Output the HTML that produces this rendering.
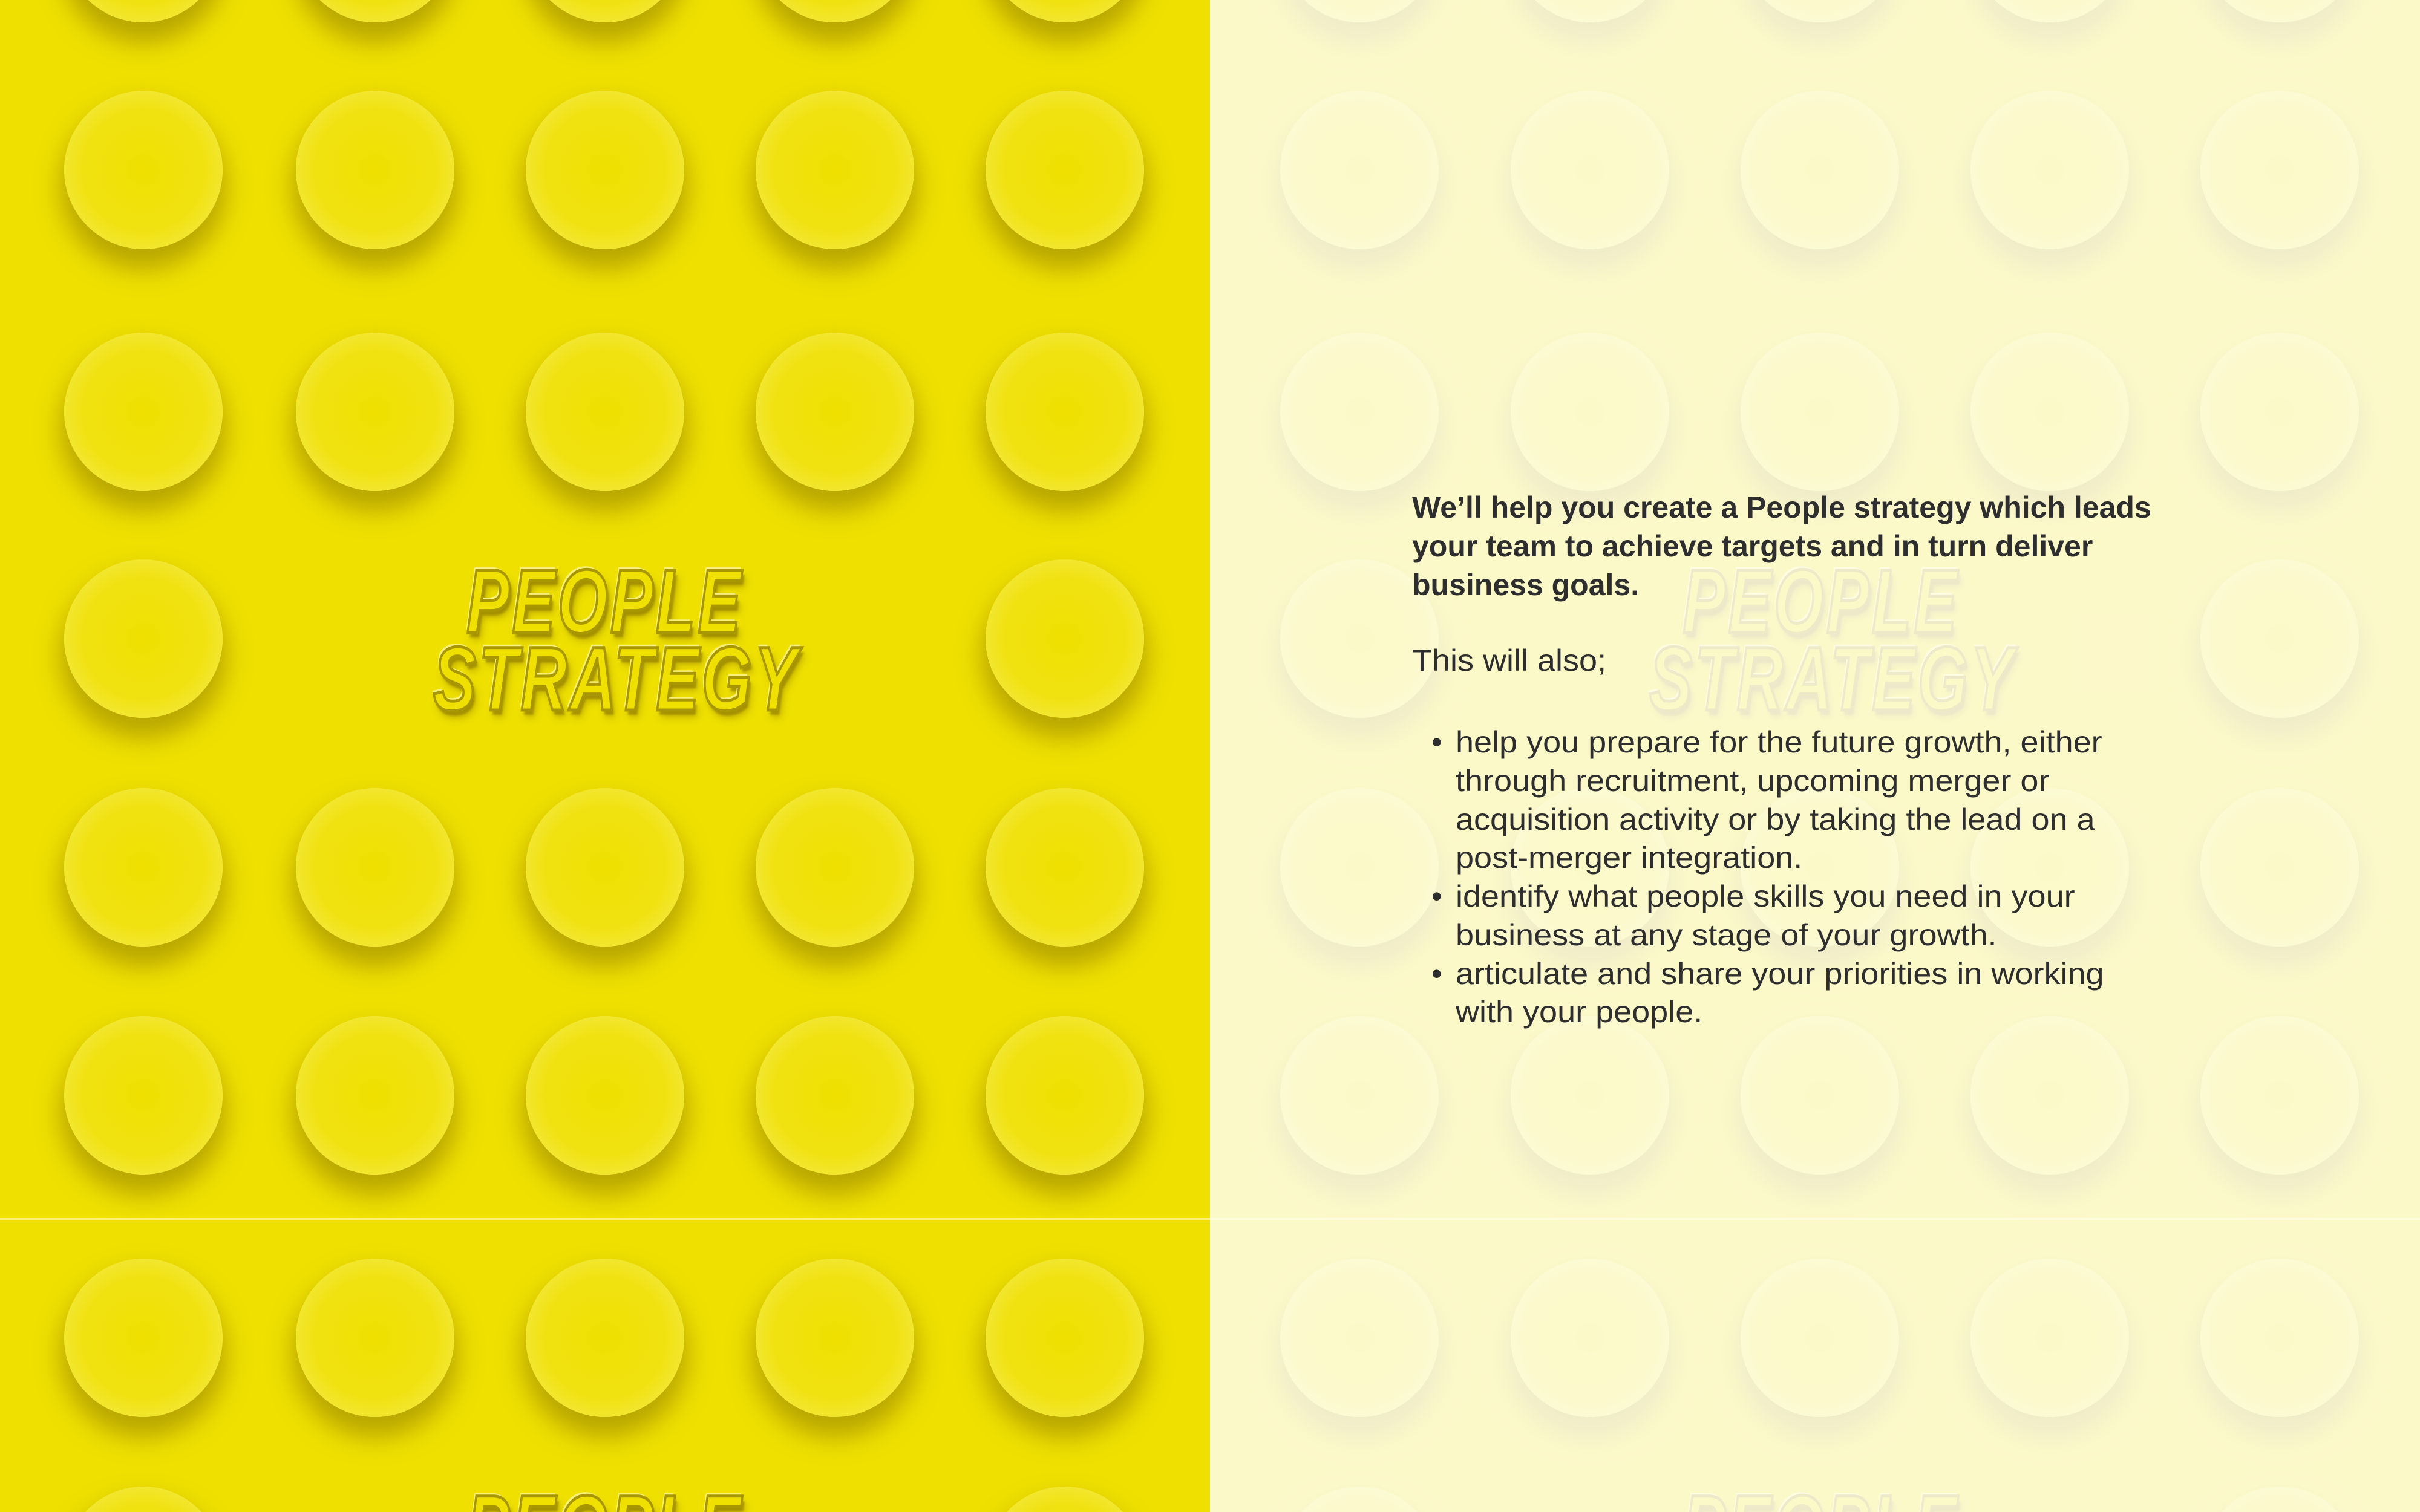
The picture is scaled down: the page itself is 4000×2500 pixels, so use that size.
<!DOCTYPE html>
<html style="overflow:hidden;width:4000px;height:2500px;"><head><meta charset="utf-8">
<style>
html,body{margin:0;padding:0;}
body{width:4000px;height:2500px;overflow:hidden;position:relative;background:#efe000;font-family:"Liberation Sans",sans-serif;}
.panel{position:absolute;top:0;width:2000px;height:2500px;overflow:hidden;background:#efe000;}
.c{position:absolute;width:262px;height:262px;border-radius:50%;
 background:radial-gradient(circle at 50% 50%,#efe000 0%,#f0e212 55%,#f4ea4a 85%,#f6ee70 100%);
 box-shadow:0 28px 40px 6px rgba(140,120,0,0.55);}
.title{position:absolute;width:800px;text-align:center;font-weight:bold;font-style:italic;color:#efe000;
 font-size:150px;line-height:128px;letter-spacing:6px;
 -webkit-text-stroke:5px #a89700;
 text-shadow:-4px -5px 0 #f8f07a,5px 8px 4px rgba(150,130,0,0.7),8px 12px 14px rgba(150,130,0,0.5);}
.title div{transform:scaleX(0.71);}
.ov{position:absolute;left:2000px;top:0;width:2000px;height:2500px;background:rgba(255,255,255,0.79);}
.t{position:absolute;left:2334px;white-space:nowrap;font-size:50px;line-height:64px;height:64px;color:#2e2e2e;transform:scaleX(1.08);transform-origin:left center;}
.b{font-weight:bold;transform:scaleX(1.0);}
.bul{position:absolute;left:2366px;font-size:50px;line-height:64px;color:#2e2e2e;}
</style></head>
<body>
<div class="panel" id="p1" style="left:0">
 <div class="title" style="left:600px;top:930px;"><div>PEOPLE</div><div>STRATEGY</div></div>
 <div class="title" style="left:600px;top:2461px;height:39px;overflow:visible"><div>PEOPLE</div></div>
</div>
<div class="panel" id="p2" style="left:2000px">
 <div class="title" style="left:610px;top:930px;"><div>PEOPLE</div><div>STRATEGY</div></div>
 <div class="title" style="left:610px;top:2461px;height:39px;overflow:visible"><div>PEOPLE</div></div>
</div>
<div style="position:absolute;left:0;top:2014px;width:4000px;height:3px;background:rgba(255,255,180,0.6)"></div>
<div class="ov"></div>

<div class="t b" style="top:807px">We’ll help you create a People strategy which leads</div>
<div class="t b" style="top:871px">your team to achieve targets and in turn deliver</div>
<div class="t b" style="top:935px">business goals.</div>
<div class="t" style="top:1060px">This will also;</div>
<div class="bul" style="top:1195px">•</div>
<div class="t" style="left:2406px;top:1195px">help you prepare for the future growth, either</div>
<div class="t" style="left:2406px;top:1259px">through recruitment, upcoming merger or</div>
<div class="t" style="left:2406px;top:1323px">acquisition activity or by taking the lead on a</div>
<div class="t" style="left:2406px;top:1386px">post-merger integration.</div>
<div class="bul" style="top:1450px">•</div>
<div class="t" style="left:2406px;top:1450px">identify what people skills you need in your</div>
<div class="t" style="left:2406px;top:1514px">business at any stage of your growth.</div>
<div class="bul" style="top:1578px">•</div>
<div class="t" style="left:2406px;top:1578px">articulate and share your priorities in working</div>
<div class="t" style="left:2406px;top:1641px">with your people.</div>

<script>
(function(){
 var rows=[-94,281,681,1056,1434,1811,2212,2589];
 var titleRows={1056:1,2589:1};
 var colsL=[237,620,1000,1380,1760];
 var colsR=[247,628,1008,1388,1768];
 function fill(id,cols){
  var p=document.getElementById(id);
  rows.forEach(function(y){
   cols.forEach(function(x,i){
    if(titleRows[y] && i>0 && i<4) return;
    var d=document.createElement('div');d.className='c';
    d.style.left=(x-131)+'px';d.style.top=(y-131)+'px';
    p.insertBefore(d,p.firstChild);
   });
  });
 }
 fill('p1',colsL);fill('p2',colsR);
})();
</script>
</body></html>
